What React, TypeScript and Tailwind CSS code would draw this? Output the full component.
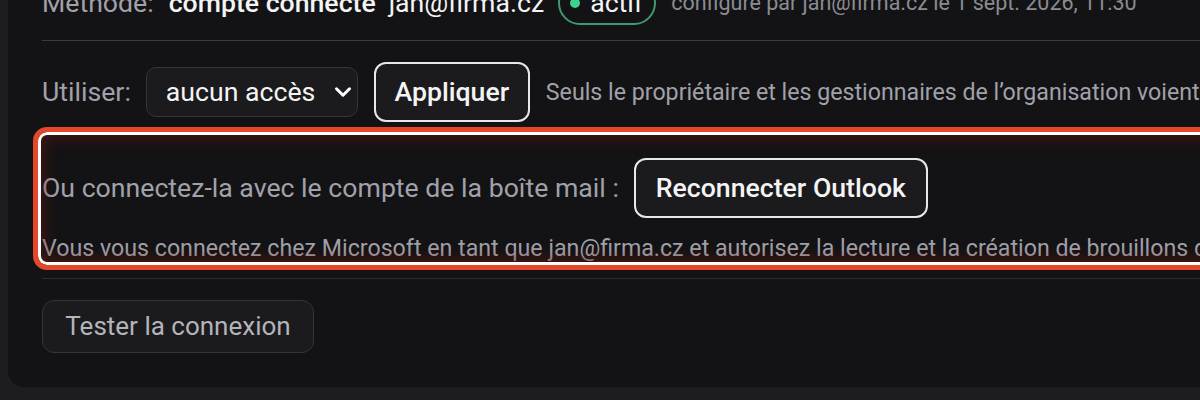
import React from "react";
import { ChevronDown } from "lucide-react";

const font = { fontFamily: "Roboto, 'Liberation Sans', sans-serif" };

export default function App() {
  return (
    <div
      className="h-[400px] w-[1200px] overflow-hidden bg-[#1d1d20] pl-2"
      style={font}
    >
      <div className="rounded-bl-2xl bg-[#131315] pb-[34px] pl-[34px]">
        {/* status row, cut at the top */}
        <div className="-mt-[19px] flex h-[44px] items-center whitespace-nowrap text-[26.67px]">
          <span className="shrink-0 text-[#a1a1aa]">Méthode:</span>
          <span className="ml-[15px] shrink-0 font-medium text-[#f4f4f5]">compte connecté</span>
          <span className="ml-[13px] shrink-0 text-[#f4f4f5]">jan@firma.cz</span>
          <span className="ml-[14px] flex h-[44px] w-[98px] shrink-0 items-center gap-[10px] rounded-full border-2 border-[#3f9a73] pl-[10px] text-[#f4f4f5]">
            <span className="h-[10px] w-[10px] rounded-full bg-[#3fcf8e]" />
            actif
          </span>
          <span className="ml-[15px] shrink-0 text-[21.5px] text-[#8b8b92]">
            configuré par jan@firma.cz le 1 sept. 2026, 11:30
          </span>
        </div>
        <div className="mt-[15px] h-px bg-[#3a3a3e]" />

        {/* access row */}
        <div className="mt-[21px] flex items-center whitespace-nowrap text-[26.67px]">
          <span className="shrink-0 text-[#a1a1aa]">Utiliser:</span>
          <div className="ml-[15px] flex h-[50px] w-[212px] shrink-0 items-center justify-between rounded-[10px] border border-[#34343a] bg-[#1b1b1e] pl-[19px] pr-[1px] text-[#f4f4f5]">
            aucun accès
            <ChevronDown size={26} strokeWidth={2.8} className="text-white" />
          </div>
          <button className="ml-[16px] h-[60px] w-[156px] shrink-0 rounded-[12px] border-2 border-[#e8e8ea] bg-[#1b1b1e] text-[26.67px] font-medium text-[#f4f4f5]">
            Appliquer
          </button>
          <span className="ml-[16px] shrink-0 text-[23.2px] text-[#a1a1aa]">
            Seuls le propriétaire et les gestionnaires de l’organisation voient
            cette boîte
          </span>
        </div>

        {/* highlighted mailbox section */}
        <div className="relative mt-[5px] whitespace-nowrap pb-[8px] pt-[31px]">
          <div className="flex items-center">
            <span className="shrink-0 text-[26.67px] text-[#a1a1aa]">
              Ou connectez-la avec le compte de la boîte mail :
            </span>
            <button className="ml-[15px] h-[60px] w-[294px] shrink-0 rounded-[12px] border-2 border-[#e8e8ea] bg-[#1b1b1e] text-[26.67px] font-medium text-[#f4f4f5]">
              Reconnecter Outlook
            </button>
          </div>
          <div className="mt-[16px] text-[23.2px] leading-[28px] text-[#a1a1aa]">
            Vous vous connectez chez Microsoft en tant que jan@firma.cz et
            autorisez la lecture et la création de brouillons dans cette boîte.
          </div>
          <div className="pointer-events-none absolute -left-[9px] -right-[40px] bottom-0 top-0 rounded-[14px] border-[5px] border-[#e5472b] shadow-[inset_0_0_0_3px_#ffffff,inset_0_0_14px_6px_rgba(110,25,15,0.55)]" />
        </div>

        <div className="mt-[8px] h-px bg-[#2c2c30]" />

        <button className="mt-[21px] h-[53px] w-[272px] rounded-[12px] border border-[#34343a] bg-[#1b1b1e] text-[26px] text-[#b4b4ba]">
          Tester la connexion
        </button>
      </div>
    </div>
  );
}
